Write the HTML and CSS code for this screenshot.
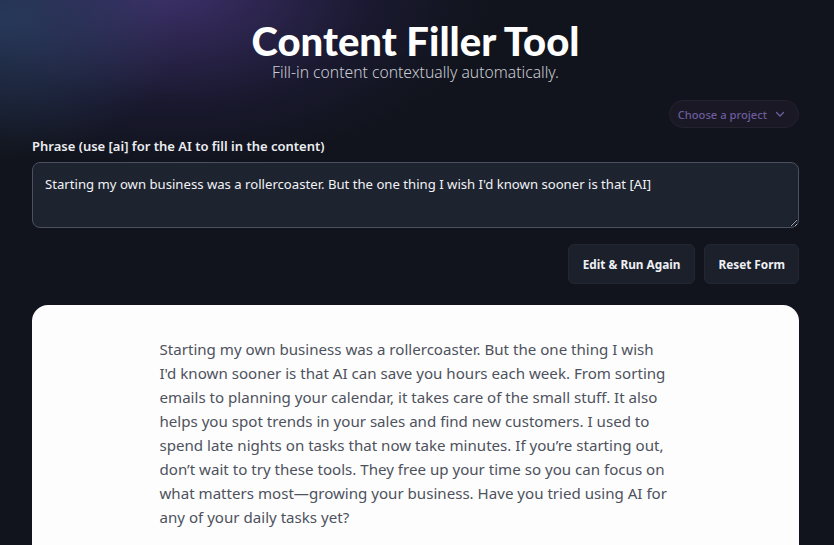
FILE: index.html
```html
<!DOCTYPE html>
<html lang="en">
<head>
<meta charset="utf-8">
<title>Content Filler Tool</title>
<link rel="stylesheet" href="styles.css">
</head>
<body>
<div class="glow"></div>
<main class="page">
  <header class="hero">
    <h1 class="title">Content Filler Tool</h1>
    <p class="subtitle">Fill-in content contextually automatically.</p>
  </header>
  <div class="project-row">
    <button class="project-select">Choose a project
      <svg class="chev" width="12" height="12" viewBox="0 0 12 12"><path d="M2.5 4.5 L6 8 L9.5 4.5" fill="none" stroke="currentColor" stroke-width="1.4" stroke-linecap="round" stroke-linejoin="round"/></svg>
    </button>
  </div>
  <label class="label" for="phrase">Phrase (use [ai] for the AI to fill in the content)</label>
  <textarea id="phrase" class="phrase">Starting my own business was a rollercoaster. But the one thing I wish I'd known sooner is that [AI]</textarea>
  <div class="actions">
    <button class="btn">Edit &amp; Run Again</button>
    <button class="btn">Reset Form</button>
  </div>
  <section class="result">
    <p class="prose">Starting my own business was a rollercoaster. But the one thing I wish<br>
I'd known sooner is that AI can save you hours each week. From sorting<br>
emails to planning your calendar, it takes care of the small stuff. It also<br>
helps you spot trends in your sales and find new customers. I used to<br>
spend late nights on tasks that now take minutes. If you’re starting out,<br>
don’t wait to try these tools. They free up your time so you can focus on<br>
what matters most—growing your business. Have you tried using AI for<br>
any of your daily tasks yet?</p>
  </section>
</main>
</body>
</html>
```
FILE: styles.css
```css
* { box-sizing: border-box; }
html, body { margin: 0; height: 100%; }
body {
  background: #11141c;
  font-family: "Noto Sans", "Open Sans", sans-serif;
  color: #e5e7eb;
  overflow: hidden;
  position: relative;
}
.glow {
  position: absolute;
  inset: 0;
  pointer-events: none;
  background:
    radial-gradient(ellipse 180px 140px at 0px 20px, rgba(45, 80, 115, 0.55), transparent),
    radial-gradient(ellipse 380px 210px at 170px -10px, rgba(72, 55, 125, 0.8), rgba(40, 32, 80, 0.35) 55%, transparent 85%);
}
.page {
  position: relative;
  padding: 0 35px 0 32px;
  display: flex;
  flex-direction: column;
}
.hero {
  text-align: center;
  padding-top: 21px;
}
.title {
  margin: 0;
  font-family: "Lato", sans-serif;
  font-weight: 900;
  font-size: 40px;
  line-height: 40px;
  color: #ffffff;
}
.subtitle {
  margin: 1px 0 0;
  font-size: 15.7px;
  line-height: 20px;
  font-weight: 300;
  color: #c9cbd2;
}
.project-row {
  display: flex;
  justify-content: flex-end;
  margin-top: 18px;
}
.project-select {
  display: flex;
  align-items: center;
  gap: 7px;
  height: 28px;
  padding: 0 12px 0 8px;
  border-radius: 14px;
  border: 1px solid #24222f;
  background: #191824;
  color: #6c5c9c;
  font-family: "Noto Sans", sans-serif;
  font-size: 11.2px;
  font-weight: 500;
}
.chev { color: #6c5c9c; }
.label {
  margin-top: 9px;
  font-size: 13px;
  font-weight: 600;
  line-height: 18px;
  color: #eceef2;
}
.phrase {
  margin-top: 7px;
  height: 66px;
  width: 100%;
  resize: vertical;
  background: #1e2330;
  border: 1px solid #4a5061;
  border-radius: 8px;
  padding: 11px 12px;
  color: #f1f2f5;
  font-family: "Noto Sans", sans-serif;
  font-size: 13.15px;
  line-height: 20px;
  outline: none;
}
.actions {
  display: flex;
  justify-content: flex-end;
  gap: 9px;
  margin-top: 16px;
}
.btn {
  height: 40px;
  padding: 0 14px;
  border-radius: 6px;
  border: 1px solid #222733;
  background: #1b202b;
  color: #eef0f4;
  font-family: "Noto Sans", sans-serif;
  font-size: 11.8px;
  font-weight: 700;
}
.btn + .btn { padding: 0 13px; }
.result {
  margin-top: 21px;
  background: #fdfdfe;
  border-radius: 16px;
  min-height: 300px;
  padding: 32px 0 0;
}
.prose {
  margin: 0 auto;
  width: 512px;
  white-space: nowrap;
  font-family: "Noto Sans", sans-serif;
  font-size: 15.1px;
  line-height: 24px;
  color: #4d525c;
}
```
